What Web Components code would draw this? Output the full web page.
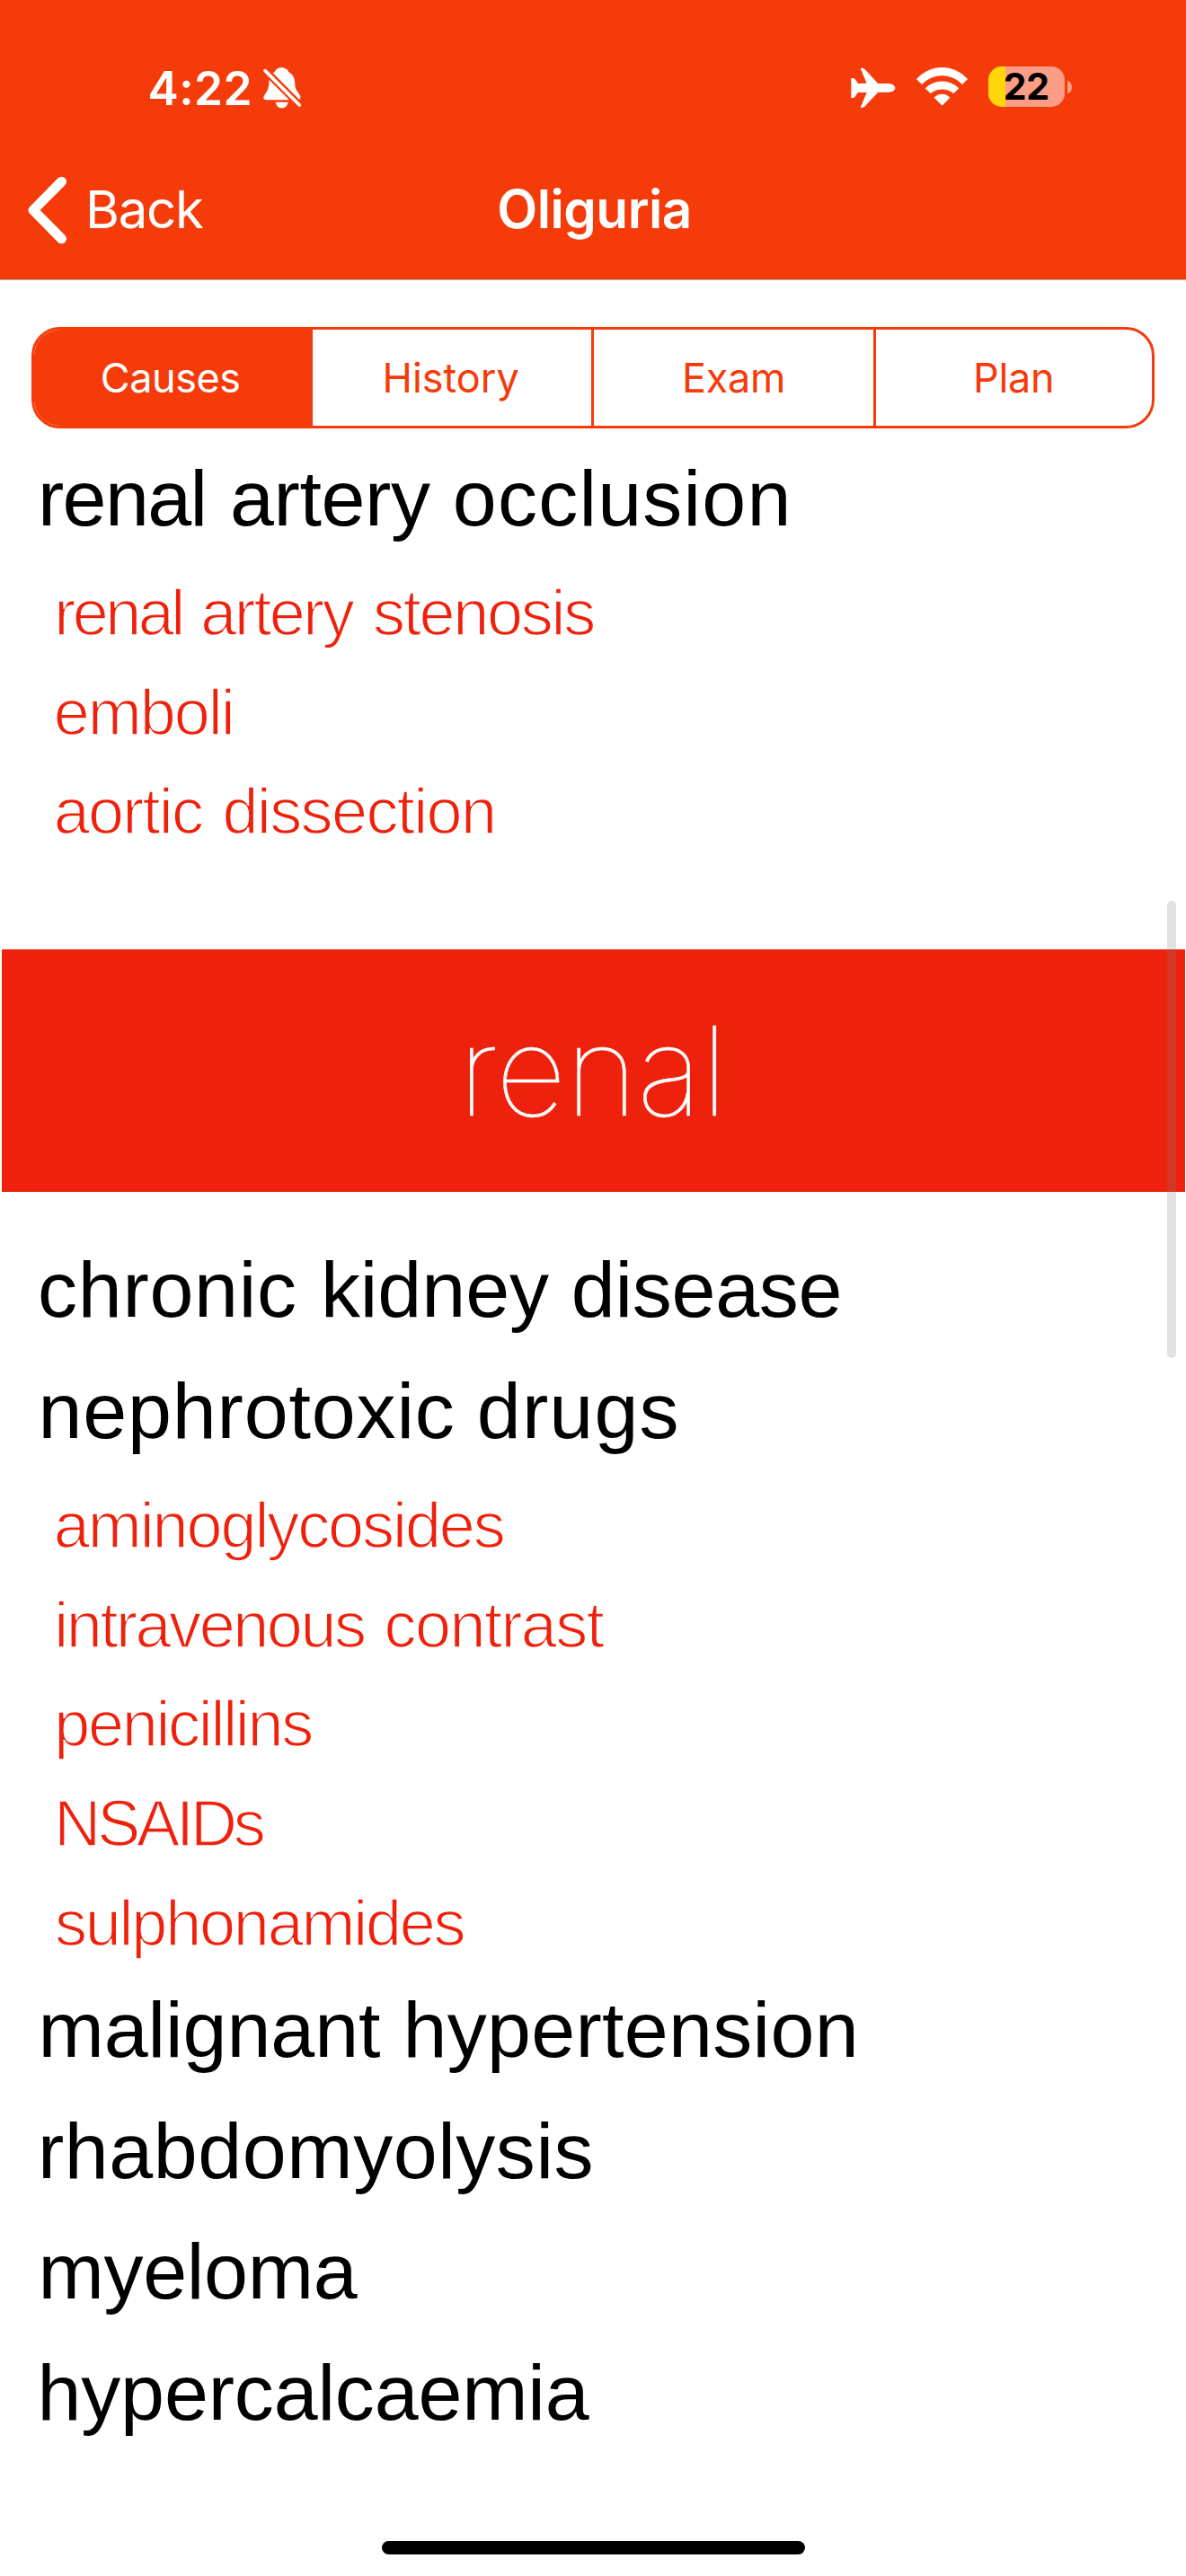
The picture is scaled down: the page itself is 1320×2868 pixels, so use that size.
<!DOCTYPE html>
<html lang="en">
<head>
<meta charset="utf-8">
<title>Oliguria</title>
<style>
  html, body { margin: 0; background: #fff; }
  body { width: 1320px; height: 2868px; overflow: hidden; }
</style>
</head>
<body>
<app-screen>
  <app-header slot="header" heading="Oliguria" back="Back"></app-header>
  <segment-control slot="tabs">
    <segment-item ink="0 152.5" selected>Causes</segment-item>
    <segment-item ink="0 149">History</segment-item>
    <segment-item ink="0 109">Exam</segment-item>
    <segment-item ink="0 85">Plan</segment-item>
  </segment-control>

  <cause-item ink="47 225.4 259 479 506.7 875.5">renal artery occlusion</cause-item>
  <cause-detail ink="64.3 202.3 226.3 394.7 417 661.3">renal artery stenosis</cause-detail>
  <cause-detail ink="62.8 257.8">emboli</cause-detail>
  <cause-detail ink="62.8 225.9 250.4 549">aortic dissection</cause-detail>

  <section-band ink="0 274.5">renal</section-band>

  <cause-item ink="45 328 361.9 611 638.8 934.5">chronic kidney disease</cause-item>
  <cause-item ink="47.5 503.8 533.8 752.5">nephrotoxic drugs</cause-item>
  <cause-detail ink="62.8 560.8">aminoglycosides</cause-detail>
  <cause-detail ink="64.3 406 430.5 672.8">intravenous contrast</cause-detail>
  <cause-detail ink="64.3 347.2">penicillins</cause-detail>
  <cause-detail ink="65.3 293.8">NSAIDs</cause-detail>
  <cause-detail ink="63 516.6">sulphonamides</cause-detail>
  <cause-item ink="47.5 423 454.4 950.7">malignant hypertension</cause-item>
  <cause-item ink="47 657.5">rhabdomyolysis</cause-item>
  <cause-item ink="47.5 397.7">myeloma</cause-item>
  <cause-item ink="47.5 655.7">hypercalcaemia</cause-item>
</app-screen>

<script>
const tpl = (html) => { const t = document.createElement('template'); t.innerHTML = html; return t; };
const attach = (el, t) => el.attachShadow({ mode: 'open' }).appendChild(t.content.cloneNode(true));

/* Line of text tracked word by word; `ink` lists the left and right glyph edges of each word. */
class TrackedText extends HTMLElement {
  static t = tpl(`<style>
    :host { display: block; flex: none; white-space: pre; }
  </style><slot></slot>`);
  connectedCallback() {
    if (this.shadowRoot) return;
    attach(this, TrackedText.t);
    const words = this.textContent.trim().split(' ');
    const edges = this.getAttribute('ink').split(' ').map(Number);
    const cs = getComputedStyle(this);
    const ctx = document.createElement('canvas').getContext('2d');
    ctx.font = cs.fontWeight + ' ' + cs.fontSize + ' ' + cs.fontFamily;
    const run = (text, spacing) => {
      const s = document.createElement('span');
      s.textContent = text;
      s.style.letterSpacing = spacing + 'px';
      return s;
    };
    const space = ctx.measureText(' ').width;
    const runs = [];
    let pen = 0;
    words.forEach((word, i) => {
      const [left, right] = edges.slice(i * 2, i * 2 + 2);
      const m = ctx.measureText(word);
      const origin = left + m.actualBoundingBoxLeft;
      const tracking = (right - left - m.actualBoundingBoxLeft - m.actualBoundingBoxRight) / (word.length - 1);
      const span = run(word, tracking);
      if (i) runs.push(run(' ', origin - pen - space));
      else span.style.marginLeft = origin + 'px';
      runs.push(span);
      pen = origin + m.width + tracking * word.length;
    });
    this.style.width = edges[edges.length - 1] + 'px';
    this.replaceChildren(...runs);
  }
}

class StatusBar extends HTMLElement {
  static t = tpl(`<style>
    :host { display: flex; box-sizing: border-box; height: 162px; padding: 34px 127px 0 166.5px;
      align-items: center; justify-content: space-between; color: #fff; }
    .side { display: flex; align-items: center; height: 128px; }
    .time { font-size: 51.5px; font-weight: 600; line-height: 124px; }
    svg { display: block; flex: none; }
    .bell { margin-left: 14px; }
    .wifi { margin-left: 22px; }
    .battery { display: flex; align-items: center; justify-content: center; width: 85px; height: 45px;
      margin: -3px 3px 0 21px; border-radius: 15px; color: #000;
      background: linear-gradient(90deg, #ffd60a 19px, #fc9d85 19px); }
    .battery tracked-text { font-size: 41px; font-weight: 650; line-height: 45px; }
    .cap { width: 5px; height: 14px; margin-top: -3px; border-radius: 0 5px 5px 0 / 0 7px 7px 0; background: #fc9d85; }
  </style>
  <div class="side">
    <tracked-text class="time" ink="0 111">4:22</tracked-text>
    <svg class="bell" width="45" height="50" viewBox="455 70 135 150">
      <path fill="#fff" d="M519 77C532 77 540 84 543 92C560 100 564 118 564 135C564 153 580 163 582 173Q583 185 573 185H468Q458 185 459 176C462 165 477 155 477 128C477 108 486 96 496 92C499 83 508 77 519 77Z"/>
      <path fill="#fff" d="M499 192H541C539 205 530 212 520 212S501 205 499 192Z"/>
      <path stroke="#f63b0a" stroke-width="25" d="M455 77L584 207"/>
      <path stroke="#fff" stroke-width="11" stroke-linecap="round" d="M464 87L579 202"/>
    </svg>
  </div>
  <div class="side">
    <svg width="50" height="46" viewBox="80 76 150 138">
      <path fill="#fff" d="M112 79Q122 77 127 83L171 130H207Q227 133 228 145Q227 157 207 159H171L127 206Q122 212 112 210L133 160L104 159L93 175Q90 179 81 178V112Q90 111 93 114L104 130L133 129Z"/>
    </svg>
    <svg class="wifi" width="60" height="46" viewBox="297 74 180 138">
      <g fill="#fff" stroke="#fff" stroke-width="2" stroke-linejoin="round">
        <path d="M301 113A113 113 0 0 1 470 113L453 130A92 92 0 0 0 318 130Z"/>
        <path d="M330 144A80 80 0 0 1 441 144L424 160A61 61 0 0 0 347 160Z"/>
        <path d="M360 175A35 35 0 0 1 411 175L386 201Z"/>
      </g>
    </svg>
    <div class="battery"><tracked-text ink="0 47.5">22</tracked-text></div>
    <div class="cap"></div>
  </div>`);
  connectedCallback() { if (!this.shadowRoot) attach(this, StatusBar.t); }
}

class AppHeader extends HTMLElement {
  connectedCallback() {
    if (this.shadowRoot) return;
    attach(this, tpl(`<style>
      :host { display: block; box-sizing: border-box; height: 312px; background: #f63b0a;
        border-bottom: 1px solid #b5b5b5; color: #fff; }
      nav { display: grid; grid-template-columns: 1fr auto 1fr; align-items: center; height: 142px; }
      .back { display: flex; align-items: center; padding-left: 30px; font-size: 58px; line-height: 142px; }
      .back svg { display: block; margin: 1px 24px 0 0; }
      .title { font-size: 58.5px; font-weight: 600; line-height: 142px; margin-left: 2px; }
    </style>
    <status-bar></status-bar>
    <nav>
      <div class="back">
        <svg width="46" height="76" viewBox="0 0 46 76"><path d="M38.5 6.2L7 38L38.5 69.8" fill="none" stroke="#fff" stroke-width="11" stroke-linecap="round" stroke-linejoin="round"/></svg>
        <tracked-text ink="0 127">${this.getAttribute('back')}</tracked-text>
      </div>
      <tracked-text class="title" ink="0 211.5">${this.getAttribute('heading')}</tracked-text>
    </nav>`));
  }
}

class SegmentControl extends HTMLElement {
  static t = tpl(`<style>
    :host { display: grid; grid-template-columns: 310px 310px 314px 310px; box-sizing: border-box;
      height: 113px; margin: 52px 35px 0; border: 3px solid #f63b0a; border-radius: 32px; overflow: hidden; }
    ::slotted(*) { box-sizing: border-box; }
    ::slotted(:nth-child(n+3)) { border-left: 3px solid #f63b0a; }
    ::slotted(:first-child) { padding-right: 6px; }
  </style><slot></slot>`);
  connectedCallback() { if (!this.shadowRoot) attach(this, SegmentControl.t); }
}

class SegmentItem extends HTMLElement {
  connectedCallback() {
    if (this.shadowRoot) return;
    attach(this, tpl(`<style>
      :host { display: flex; justify-content: center; color: #f63b0a;
        font-size: 45px; line-height: 107px; }
      :host([selected]) { background: #f63b0a; color: #fff; }
    </style><tracked-text ink="${this.getAttribute('ink')}">${this.textContent}</tracked-text>`));
  }
}

class CauseItem extends HTMLElement {
  connectedCallback() {
    if (this.shadowRoot) return;
    attach(this, tpl(`<style>
      :host { display: block; height: 134.8px; color: #000;
        font: 88px "Liberation Sans", Arial, sans-serif; line-height: 134.8px; }
    </style><tracked-text ink="${this.getAttribute('ink')}">${this.textContent}</tracked-text>`));
  }
}

/* Light-weight line: a background-coloured outline slims the strokes. */
class CauseDetail extends HTMLElement {
  connectedCallback() {
    if (this.shadowRoot) return;
    attach(this, tpl(`<style>
      :host { display: block; height: 110.8px; color: #ee220c;
        font: 72px "Liberation Sans", Arial, sans-serif; line-height: 118px; -webkit-text-stroke: 1.6px #fff; }
    </style><tracked-text ink="${this.getAttribute('ink')}">${this.textContent}</tracked-text>`));
  }
}

class SectionBand extends HTMLElement {
  connectedCallback() {
    if (this.shadowRoot) return;
    attach(this, tpl(`<style>
      :host { display: flex; justify-content: center; height: 270px; margin: 102px 1.5px 42px 2px;
        background: #ee220c; color: #fff; font: 100 137px Inter, sans-serif; line-height: 270px;
        -webkit-text-stroke: .5px #fff; }
    </style><tracked-text ink="${this.getAttribute('ink')}">${this.textContent}</tracked-text>`));
  }
}

class AppScreen extends HTMLElement {
  static t = tpl(`<style>
    :host { display: flex; flex-direction: column; position: relative; width: 1320px; height: 2868px;
      overflow: hidden; background: #fff; font-family: Inter, sans-serif; }
    main { flex: 1; padding-top: 11px; min-height: 0; }
    .thumb { position: absolute; right: 11px; top: 1003px; width: 10px; height: 509px; border-radius: 5px;
      background: rgba(125, 125, 125, .22); }
    .home { flex: none; align-self: center; width: 471px; height: 15px; margin-bottom: 24px;
      border-radius: 8px; background: #000; }
  </style>
  <slot name="header"></slot>
  <slot name="tabs"></slot>
  <main><slot></slot></main>
  <div class="home"></div>
  <div class="thumb"></div>`);
  connectedCallback() { if (!this.shadowRoot) attach(this, AppScreen.t); }
}

customElements.define('app-screen', AppScreen);
customElements.define('app-header', AppHeader);
customElements.define('status-bar', StatusBar);
customElements.define('segment-control', SegmentControl);
customElements.define('segment-item', SegmentItem);
customElements.define('cause-item', CauseItem);
customElements.define('cause-detail', CauseDetail);
customElements.define('section-band', SectionBand);
customElements.define('tracked-text', TrackedText);
</script>
</body>
</html>
